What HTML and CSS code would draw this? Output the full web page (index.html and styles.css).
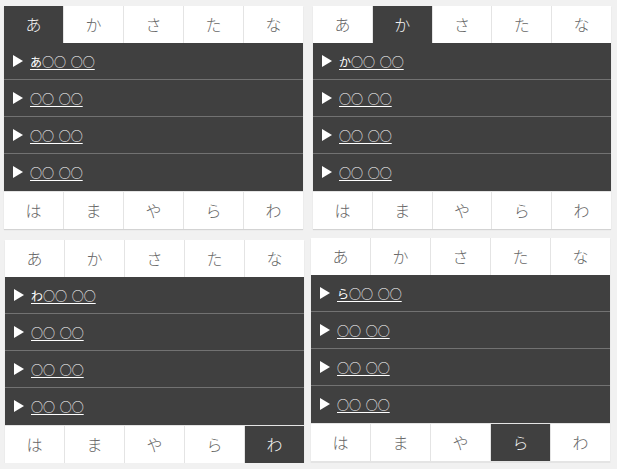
FILE: index.html
```html
<!DOCTYPE html>
<html lang="ja">
<head>
<meta charset="utf-8">
<title>tabs</title>
<link rel="stylesheet" href="styles.css">
</head>
<body>
<div class="grid">
  <section class="panel p1">
    <div class="tabs">
      <div class="tab active">あ</div><div class="tab">か</div><div class="tab">さ</div><div class="tab">た</div><div class="tab">な</div>
    </div>
    <ul class="list">
      <li><span class="tri"></span><a href="#">あ○○ ○○</a></li>
      <li><span class="tri"></span><a href="#">○○ ○○</a></li>
      <li><span class="tri"></span><a href="#">○○ ○○</a></li>
      <li><span class="tri"></span><a href="#">○○ ○○</a></li>
    </ul>
    <div class="tabs bottom">
      <div class="tab">は</div><div class="tab">ま</div><div class="tab">や</div><div class="tab">ら</div><div class="tab">わ</div>
    </div>
  </section>
  <section class="panel p2">
    <div class="tabs">
      <div class="tab">あ</div><div class="tab active">か</div><div class="tab">さ</div><div class="tab">た</div><div class="tab">な</div>
    </div>
    <ul class="list">
      <li><span class="tri"></span><a href="#">か○○ ○○</a></li>
      <li><span class="tri"></span><a href="#">○○ ○○</a></li>
      <li><span class="tri"></span><a href="#">○○ ○○</a></li>
      <li><span class="tri"></span><a href="#">○○ ○○</a></li>
    </ul>
    <div class="tabs bottom">
      <div class="tab">は</div><div class="tab">ま</div><div class="tab">や</div><div class="tab">ら</div><div class="tab">わ</div>
    </div>
  </section>
  <section class="panel p3">
    <div class="tabs">
      <div class="tab">あ</div><div class="tab">か</div><div class="tab">さ</div><div class="tab">た</div><div class="tab">な</div>
    </div>
    <ul class="list">
      <li><span class="tri"></span><a href="#">わ○○ ○○</a></li>
      <li><span class="tri"></span><a href="#">○○ ○○</a></li>
      <li><span class="tri"></span><a href="#">○○ ○○</a></li>
      <li><span class="tri"></span><a href="#">○○ ○○</a></li>
    </ul>
    <div class="tabs bottom">
      <div class="tab">は</div><div class="tab">ま</div><div class="tab">や</div><div class="tab">ら</div><div class="tab active">わ</div>
    </div>
  </section>
  <section class="panel p4">
    <div class="tabs">
      <div class="tab">あ</div><div class="tab">か</div><div class="tab">さ</div><div class="tab">た</div><div class="tab">な</div>
    </div>
    <ul class="list">
      <li><span class="tri"></span><a href="#">ら○○ ○○</a></li>
      <li><span class="tri"></span><a href="#">○○ ○○</a></li>
      <li><span class="tri"></span><a href="#">○○ ○○</a></li>
      <li><span class="tri"></span><a href="#">○○ ○○</a></li>
    </ul>
    <div class="tabs bottom">
      <div class="tab">は</div><div class="tab">ま</div><div class="tab">や</div><div class="tab active">ら</div><div class="tab">わ</div>
    </div>
  </section>
</div>
</body>
</html>
```

FILE: styles.css
```css
html, body {
  margin: 0;
  padding: 0;
  background: #f1f1f1;
  font-family: "Noto Sans CJK JP", "Noto Sans", sans-serif;
}

.grid {
  display: grid;
  grid-template-columns: 299px 298px;
  column-gap: 10px;
  row-gap: 11px;
  padding: 6px 0 0 4px;
}

.panel {
  width: 299px;
  background: #e4e4e4;
  box-shadow: 0 1px 1px rgba(0, 0, 0, 0.12);
}

.p2 { width: 298px; }
.p3 { margin-left: 1px; }
.p4 { margin-left: -2px; margin-top: -2px; }

.tabs {
  display: grid;
  grid-template-columns: repeat(5, 1fr);
  column-gap: 1px;
  height: 37px;
  background: #e4e4e4;
}

.tabs.bottom {
  margin-top: 1px;
}

.tab {
  background: #fff;
  color: #666;
  font-size: 16px;
  font-weight: 300;
  display: flex;
  align-items: center;
  justify-content: center;
  padding-bottom: 1px;
}

.tab.active {
  background: #404040;
  color: #f4f4f4;
}

.list {
  list-style: none;
  margin: 0;
  padding: 0 0 1px;
  background: #404040;
}

.list li {
  height: 36px;
  display: flex;
  align-items: center;
  padding-left: 9px;
  gap: 7px;
  border-top: 1px solid #727272;
}

.list li:first-child {
  border-top: 0;
}

.tri {
  width: 0;
  height: 0;
  border-left: 10px solid #fff;
  border-top: 6px solid transparent;
  border-bottom: 6px solid transparent;
}

.list a {
  color: #fff;
  font-size: 12px;
  word-spacing: 2px;
  text-decoration: underline;
  text-underline-offset: 2px;
  margin-top: 1px;
}
```
